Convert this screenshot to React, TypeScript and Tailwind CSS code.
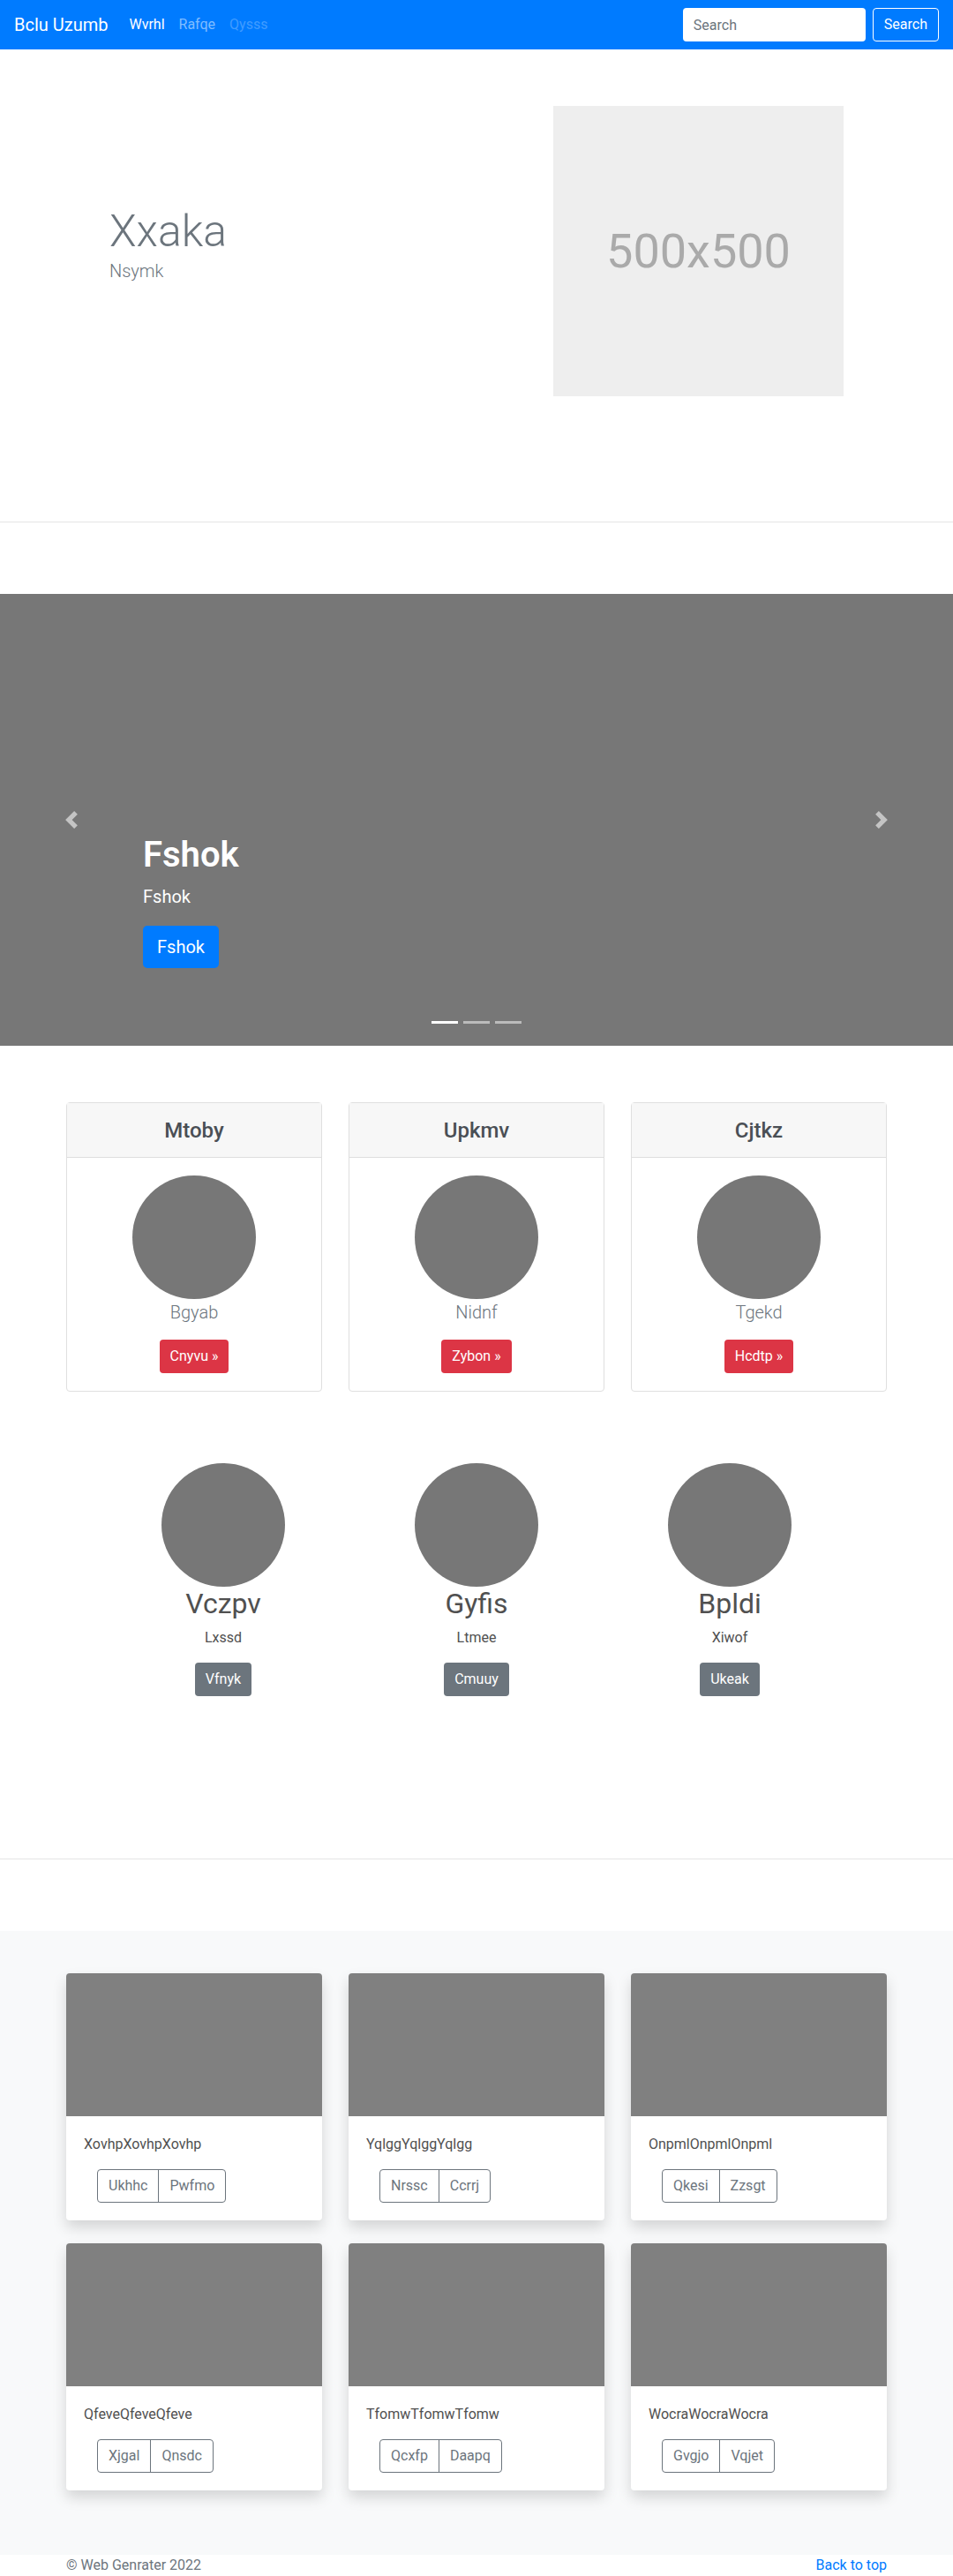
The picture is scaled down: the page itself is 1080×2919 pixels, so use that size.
import React from 'react';

const features = [
  { title: 'Mtoby', text: 'Bgyab', btn: 'Cnyvu' },
  { title: 'Upkmv', text: 'Nidnf', btn: 'Zybon' },
  { title: 'Cjtkz', text: 'Tgekd', btn: 'Hcdtp' },
];

const people = [
  { name: 'Vczpv', text: 'Lxssd', btn: 'Vfnyk' },
  { name: 'Gyfis', text: 'Ltmee', btn: 'Cmuuy' },
  { name: 'Bpldi', text: 'Xiwof', btn: 'Ukeak' },
];

const albums = [
  { text: 'XovhpXovhpXovhp', a: 'Ukhhc', b: 'Pwfmo' },
  { text: 'YqlggYqlggYqlgg', a: 'Nrssc', b: 'Ccrrj' },
  { text: 'OnpmlOnpmlOnpml', a: 'Qkesi', b: 'Zzsgt' },
  { text: 'QfeveQfeveQfeve', a: 'Xjgal', b: 'Qnsdc' },
  { text: 'TfomwTfomwTfomw', a: 'Qcxfp', b: 'Daapq' },
  { text: 'WocraWocraWocra', a: 'Gvgjo', b: 'Vqjet' },
];

const Chevron = ({ dir }: { dir: 'left' | 'right' }) => (
  <svg width="20" height="20" viewBox="0 0 8 8" fill="#c4c4c4">
    {dir === 'left' ? (
      <path d="M5.25 0l-4 4 4 4 1.5-1.5L4.25 4l2.5-2.5L5.25 0z" />
    ) : (
      <path d="M2.75 0l-1.5 1.5L3.75 4l-2.5 2.5L2.75 8l4-4-4-4z" />
    )}
  </svg>
);

const App = () => {
  return (
    <div className="font-['Segoe_UI',Roboto,'Noto_Sans','Liberation_Sans',sans-serif] text-[#212529] bg-white">
      {/* Navbar */}
      <nav className="h-[56px] bg-[#007bff] flex items-center px-4">
        <a className="text-white text-[20px] mr-4">Bclu Uzumb</a>
        <div className="flex text-[16px]">
          <a className="px-2 text-white">Wvrhl</a>
          <a className="px-2 text-[#80bdff]">Rafqe</a>
          <a className="px-2 text-[#409cff]">Qysss</a>
        </div>
        <div className="ml-auto flex items-center gap-2">
          <input
            className="w-[207px] h-[38px] rounded bg-white px-3 text-[16px] outline-none placeholder:text-[#6c757d]"
            placeholder="Search"
          />
          <button className="h-[38px] px-3 rounded border border-white text-white text-[16px]">Search</button>
        </div>
      </nav>

      {/* Hero */}
      <section className="px-[124px] pt-[64px] pb-[142px] flex items-center justify-between">
        <div className="pb-[16px]">
          <h1 className="text-[50px] leading-[1.2] font-light text-[#6c757d]">Xxaka</h1>
          <p className="text-[20px] leading-[1.5] font-light text-[#6c757d]">Nsymk</p>
        </div>
        <div className="w-[329px] h-[329px] bg-[#eeeeee] flex items-center justify-center text-[54px] text-[#aaaaaa]">
          500x500
        </div>
      </section>
      <hr className="border-0 border-t border-[#e5e5e5]" />

      {/* Carousel */}
      <section className="relative mt-[81px] h-[512px] bg-[#777777] flex flex-col justify-end pl-[162px] pb-[88px]">
        <div className="absolute left-0 top-0 h-full w-[162px] flex items-center justify-center">
          <Chevron dir="left" />
        </div>
        <div className="absolute right-0 top-0 h-full w-[162px] flex items-center justify-center">
          <Chevron dir="right" />
        </div>
        <h1 className="text-[40px] leading-[1.2] font-semibold text-white mb-2">Fshok</h1>
        <p className="text-[20px] leading-[1.5] text-white mb-[18px]">Fshok</p>
        <div>
          <button className="h-[48px] px-4 rounded-[5px] bg-[#007bff] text-white text-[20px]">Fshok</button>
        </div>
        <div className="absolute bottom-[25px] left-0 right-0 flex justify-center gap-[6px]">
          <span className="w-[30px] h-[3px] bg-white" />
          <span className="w-[30px] h-[3px] bg-[#bbbbbb]" />
          <span className="w-[30px] h-[3px] bg-[#bbbbbb]" />
        </div>
      </section>

      {/* Feature cards */}
      <section className="w-[930px] mx-auto mt-[64px] grid grid-cols-3 gap-[30px]">
        {features.map((f) => (
          <div key={f.title} className="border border-[#dfdfdf] rounded flex flex-col">
            <div className="h-[62px] bg-[#f7f7f7] border-b border-[#dfdfdf] flex items-center justify-center">
              <h4 className="text-[24px] font-medium text-[#4a4f55]">{f.title}</h4>
            </div>
            <div className="pt-5 pb-5 flex flex-col items-center">
              <div className="w-[140px] h-[140px] rounded-full bg-[#777777]" />
              <p className="text-[20px] leading-[30px] font-light text-[#6c757d] mb-4">{f.text}</p>
              <button className="h-[38px] px-3 rounded bg-[#dc3545] text-white text-[16px]">{f.btn} »</button>
            </div>
          </div>
        ))}
      </section>

      {/* People */}
      <section className="w-[861px] mx-auto mt-[81px] grid grid-cols-3">
        {people.map((p) => (
          <div key={p.name} className="flex flex-col items-center">
            <div className="w-[140px] h-[140px] rounded-full bg-[#777777]" />
            <h2 className="text-[32px] leading-[1.2] text-[#505050] mb-2">{p.name}</h2>
            <p className="text-[16px] leading-[24px] text-[#505050] mb-4">{p.text}</p>
            <button className="h-[38px] px-3 rounded bg-[#6c757d] text-white text-[16px]">{p.btn}</button>
          </div>
        ))}
      </section>
      <hr className="mt-[184px] border-0 border-t border-[#e5e5e5]" />

      {/* Album */}
      <section className="mt-[81px] bg-[#f8f9fa] pt-[48px] pb-[73px]">
        <div className="w-[930px] mx-auto grid grid-cols-3 gap-x-[30px] gap-y-[26px]">
          {albums.map((a) => (
            <div key={a.text} className="bg-white rounded overflow-hidden shadow-[0_8px_16px_rgba(0,0,0,0.15)]">
              <div className="h-[162px] bg-[#808080]" />
              <div className="p-5">
                <p className="text-[16px] leading-[24px] text-[#505050] mb-4">{a.text}</p>
                <div className="ml-[15px] inline-flex h-[38px] rounded border border-[#6c757d] text-[#6c757d] text-[16px]">
                  <button className="px-3">{a.a}</button>
                  <button className="px-3 border-l border-[#6c757d]">{a.b}</button>
                </div>
              </div>
            </div>
          ))}
        </div>
      </section>

      {/* Footer */}
      <footer className="w-[930px] mx-auto h-[24px] flex justify-between text-[16px] leading-[24px]">
        <p className="text-[#6c757d]">© Web Genrater 2022</p>
        <a className="text-[#007bff]">Back to top</a>
      </footer>
    </div>
  );
};

export default App;
